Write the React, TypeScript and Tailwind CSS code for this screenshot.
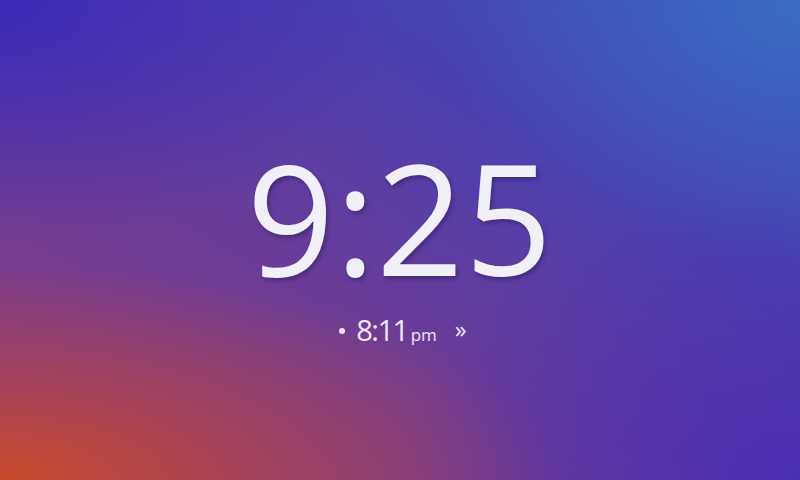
export default function App() {
  return (
    <div className="relative w-[800px] h-[480px] overflow-hidden flex flex-col items-center justify-center bg-[radial-gradient(ellipse_70%_45%_at_0%_100%,#c84a2a_0%,rgba(190,70,60,0.65)_40%,rgba(170,64,100,0)_100%),radial-gradient(ellipse_45%_55%_at_100%_0%,#3a6cc2_0%,rgba(58,108,194,0.5)_45%,rgba(58,108,194,0)_100%),radial-gradient(ellipse_50%_60%_at_100%_100%,#4a2eb2_0%,rgba(74,46,178,0)_100%),radial-gradient(ellipse_50%_50%_at_0%_0%,#3a2ab8_0%,rgba(58,42,184,0)_100%),linear-gradient(to_top_right,#8a3c80_0%,#6a3c98_40%,#4a40b0_70%,#3c50bc_100%)]" style={{ fontFamily: '"Open Sans", "Noto Sans", sans-serif' }}>
      <div className="text-[#f1eff8] text-[153px] leading-none tracking-[1px] mt-[4px] [text-shadow:2px_3px_4px_rgba(30,10,60,0.35)]">9:25</div>
      <div className="flex items-center mt-[22px] text-[#f1e8f6] ml-[6px] h-[29px]">
        <span className="w-[6px] h-[6px] rounded-full bg-[#f1e8f6] mr-[11px] mt-[2px]" />
        <div className="flex items-baseline">
          <span className="text-[29px] leading-none tracking-[-1.5px]">8:11</span>
          <span className="text-[17px] leading-none ml-[3px]">pm</span>
        </div>
        <span className="text-[24px] leading-none ml-[18px] -mt-[2px]">»</span>
      </div>
    </div>
  );
}
